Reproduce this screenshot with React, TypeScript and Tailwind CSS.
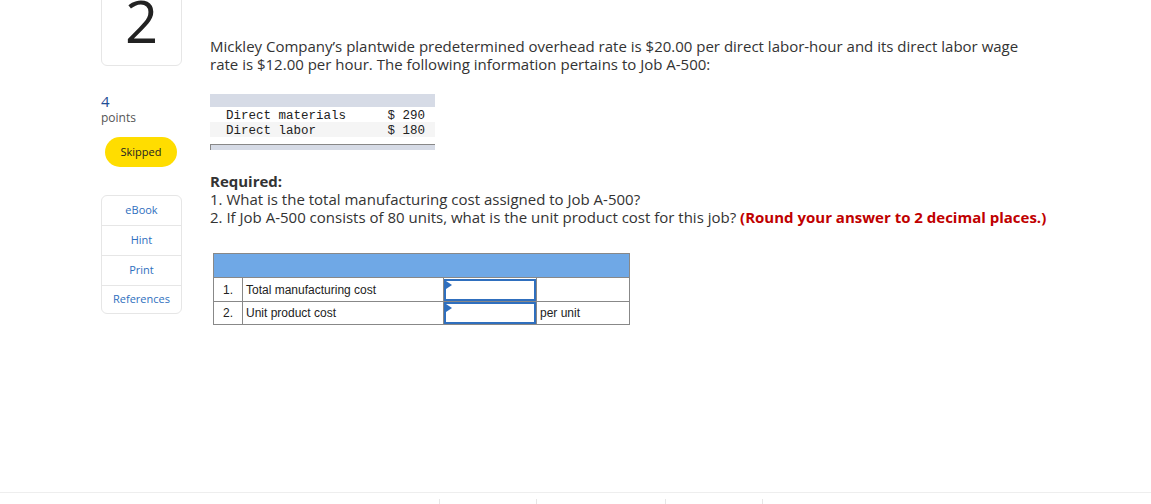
const links = ["eBook", "Hint", "Print", "References"];

function InputCell() {
  return (
    <td className="border border-[#888] p-0 w-[93px]">
      <div className="relative h-[22px] border-2 border-[#2f6fbe]">
        <span className="absolute left-0 top-0 w-0 h-0 border-t-[4px] border-b-[4px] border-l-[6px] border-t-transparent border-b-transparent border-l-[#2f6fbe]" />
      </div>
    </td>
  );
}

export default function App() {
  return (
    <div className="w-[1151px] h-[504px] bg-white overflow-hidden relative font-['Open_Sans',sans-serif] text-[#333]">
      <div className="flex">
        {/* left column */}
        <div className="w-[210px] shrink-0 pl-[101px] pr-[28px]">
          <div className="h-[106px] -mt-[40px] border border-[#e6e6e6] rounded-md flex items-end justify-center pb-[15px]">
            <span className="text-[58px] leading-none font-['Open_Sans',sans-serif] font-normal text-[#222]">2</span>
          </div>
          <div className="mt-[27px] text-[15px] leading-[16px] text-[#1f4e96]">4</div>
          <div className="mt-[2px] text-[12px] leading-[14px] text-[#555]">points</div>
          <div className="mt-[12px] ml-[4px] w-[72px] h-[30px] rounded-full bg-[#ffdd00] flex items-center justify-center text-[11px] text-[#222]">
            Skipped
          </div>
          <div className="mt-[28px] border border-[#e6e6e6] rounded-md text-[11px] text-[#2f6fbe]">
            {links.map((l, i) => (
              <div
                key={l}
                className={`flex items-center justify-center ${i === 3 ? "h-[27px]" : "h-[30px] border-b border-[#e6e6e6]"}`}
              >
                {l}
              </div>
            ))}
          </div>
        </div>

        {/* main */}
        <div className="flex-1 pt-[37px] text-[15px] leading-[18px]">
          <p className="w-[830px]">
            Mickley Company’s plantwide predetermined overhead rate is $20.00 per direct labor-hour and its direct labor wage
            rate is $12.00 per hour. The following information pertains to Job A-500:
          </p>

          <div className="mt-[21px] w-[225px] font-['Liberation_Mono',monospace] text-[12.5px] leading-[15px] text-[#222]">
            <div className="h-[13px] bg-[#d6dbe6]" />
            <div className="flex pl-[16px] pr-[10px] h-[15px] pt-[2px]">
              <span className="flex-1">Direct materials</span>
              <span>$ 290</span>
            </div>
            <div className="flex pl-[16px] pr-[10px] h-[15px] pt-[2px] bg-[#f5f5f5]">
              <span className="flex-1">Direct labor</span>
              <span>$ 180</span>
            </div>
            <div className="mt-[7px] h-[6px] bg-[#d6dbe6] border-t border-l border-[#888]" />
          </div>

          <div className="mt-[22px]">
            <div className="font-bold">Required:</div>
            <div>1. What is the total manufacturing cost assigned to Job A-500?</div>
            <div>
              2. If Job A-500 consists of 80 units, what is the unit product cost for this job?{" "}
              <span className="font-bold text-[#c00000]">(Round your answer to 2 decimal places.)</span>
            </div>
          </div>

          <table className="mt-[27px] ml-[3px] border-collapse font-['Liberation_Sans',sans-serif] text-[12px] text-[#222]">
            <tbody>
              <tr>
                <td colSpan={4} className="h-[24px] bg-[#6fa8e6] border border-[#888]" />
              </tr>
              <tr className="h-[24px]">
                <td className="w-[29px] border border-[#888] text-center">1.</td>
                <td className="w-[201px] border border-[#888] pl-[3px]">Total manufacturing cost</td>
                <InputCell />
                <td className="w-[93px] border border-[#888] pl-[3px]" />
              </tr>
              <tr className="h-[23px]">
                <td className="border border-[#888] text-center">2.</td>
                <td className="border border-[#888] pl-[3px]">Unit product cost</td>
                <InputCell />
                <td className="border border-[#888] pl-[3px]">per unit</td>
              </tr>
            </tbody>
          </table>
        </div>
      </div>

      {/* footer */}
      <div className="absolute left-0 right-0 top-[492px] border-t border-[#eeeeee] h-[12px] flex">
        <div className="w-[439px]" />
        <div className="w-[97px] border-l border-[#e6e6e6] mt-[6px]" />
        <div className="w-[129px] border-l border-[#e6e6e6] mt-[6px]" />
        <div className="w-[97px] border-l border-[#e6e6e6] mt-[6px]" />
        <div className="border-l border-[#e6e6e6] mt-[6px]" />
      </div>
    </div>
  );
}
